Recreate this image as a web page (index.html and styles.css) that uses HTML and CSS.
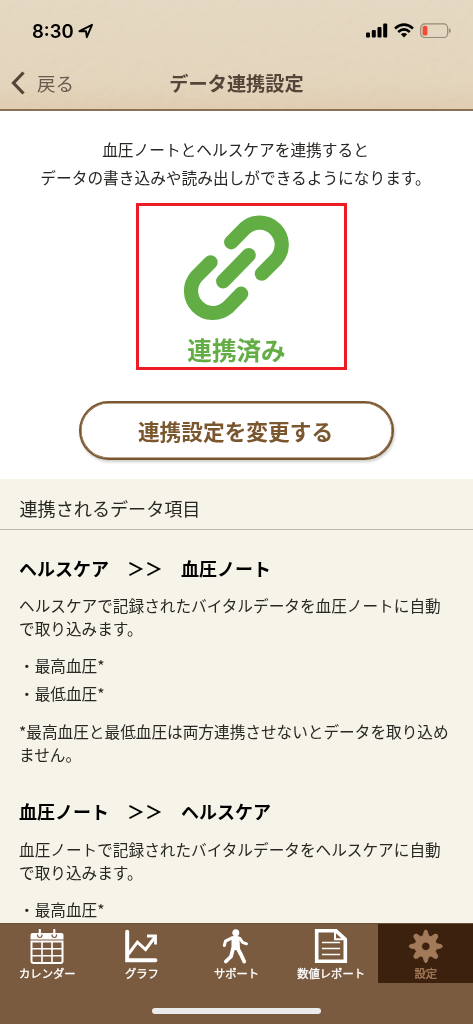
FILE: index.html
```html
<!DOCTYPE html>
<html lang="ja">
<head>
<meta charset="utf-8">
<title>データ連携設定</title>
<link rel="stylesheet" href="styles.css">
</head>
<body>
<div class="screen">
  <header class="top">
    <svg class="leather" width="473" height="109" aria-hidden="true">
      <filter id="grain" x="0" y="0" width="100%" height="100%">
        <feTurbulence type="fractalNoise" baseFrequency="0.09 0.12" numOctaves="3" seed="4" result="n"/>
        <feDiffuseLighting in="n" surfaceScale="2.4" diffuseConstant="0.62" lighting-color="#ffffff"><feDistantLight azimuth="50" elevation="55"/></feDiffuseLighting>
      </filter>
      <rect width="473" height="109" filter="url(#grain)"/>
    </svg>
    <div class="status">
      <div class="clock"><span>8:30</span>
        <svg width="16" height="16" viewBox="0 0 16 16"><path d="M1.5 8.2 14 1.8 8.8 14.2 8 8.2Z" fill="none" stroke="#000" stroke-width="1.9" stroke-linejoin="round"/></svg>
      </div>
      <div class="signals">
        <svg width="22" height="15" viewBox="0 0 22 15"><rect x="0" y="9.5" width="4" height="5" rx="1"/><rect x="5.8" y="7" width="4" height="7.5" rx="1"/><rect x="11.5" y="4" width="4" height="10.5" rx="1"/><rect x="17.2" y="0.6" width="4" height="13.9" rx="1"/></svg>
        <svg width="20" height="15" viewBox="0 0 20 15"><g fill="none" stroke="#000" stroke-width="2.6"><path d="M1 5.4Q10-2 19 5.4"/><path d="M4.2 8.9Q10 4 15.8 8.9"/></g><path d="M6.9 11.3Q10 8.8 13.1 11.3L10 14.4Z"/></svg>
        <svg width="31" height="16" viewBox="0 0 31 16"><rect x=".7" y=".9" width="27" height="13.6" rx="4" fill="none" stroke="#938a7b" stroke-width="1.2"/><rect x="2.6" y="2.8" width="4.8" height="9.8" rx="1.7" fill="#ef4d39"/><path d="M29 5.3q1.8.8 1.8 2.4T29 10.1Z" fill="#938a7b"/></svg>
      </div>
    </div>
    <div class="nav">
      <div class="back"><svg width="14" height="24" viewBox="0 0 14 24"><path d="M12.500 1.500 2.500 12l10 10.500" fill="none" stroke="#554539" stroke-width="3.2"/></svg><span>戻る</span></div>
      <h1>データ連携設定</h1>
    </div>
  </header>

  <section class="link">
    <p class="intro">血圧ノートとヘルスケアを連携すると<br>データの書き込みや読み出しができるようになります。</p>
    <div class="state">
      <svg width="110" height="110" viewBox="0 0 110 110" fill="none" stroke="#62ae45" stroke-width="14.2" stroke-linecap="round">
        <path d="M50.2 31.3 63.9 17.300A22.100 22.100 0 0 1 95.200 48.400L80.800 62.700"/>
        <path d="M42.200 70.300 67.800 44"/>
        <path d="M29.600 51.300 15.200 65.700A22.100 22.100 0 0 0 46.500 96.700L60.200 82.700"/>
      </svg>
      <strong>連携済み</strong>
    </div>
    <button class="change">連携設定を変更する</button>
  </section>

  <main class="items">
    <h2>連携されるデータ項目</h2>
    <section class="flow">
      <h3>ヘルスケア　＞＞　血圧ノート</h3>
      <p>ヘルスケアで記録されたバイタルデータを血圧ノートに自動<br>で取り込みます。</p>
      <ul><li>・最高血圧*</li><li>・最低血圧*</li></ul>
      <p>*最高血圧と最低血圧は両方連携させないとデータを取り込め<br>ません。</p>
    </section>
    <section class="flow">
      <h3>血圧ノート　＞＞　ヘルスケア</h3>
      <p>血圧ノートで記録されたバイタルデータをヘルスケアに自動<br>で取り込みます。</p>
      <ul><li>・最高血圧*</li></ul>
    </section>
  </main>

  <footer class="bar">
    <nav class="tabs">
      <a class="tab"><svg width="36" height="38" viewBox="0 0 36 38"><path d="M3.500 4h29a2 2 0 0 1 2 2v4.600h-33V6a2 2 0 0 1 2-2Z" fill="#fff"/><g fill="none" stroke="#fff" stroke-width="2"><path d="M2.500 12.500h31v19.500a2 2 0 0 1-2 2h-27a2 2 0 0 1-2-2Z"/><path d="M13 12v22M23 12v22M3 19.700h30M3 26.800h30" stroke-width="1.600"/></g><g fill="none" stroke="#7a5b3f" stroke-width="1.200"><path d="M8.500 5.500q0 3 2.300 3t2.300-3M23 5.500q0 3 2.300 3t2.300-3"/></g><path d="M10.800 1v5.500M25.300 1v5.500" stroke="#fff" stroke-width="2.200" stroke-linecap="round"/></svg><span>カレンダー</span></a>
      <a class="tab"><svg width="36" height="38" viewBox="0 0 36 38" fill="none" stroke="#fff"><path d="M3.200 2.800V31.300h28.200" stroke-width="4" stroke-linecap="round"/><path d="M4.500 25 13.400 13.200 21.600 20.500 31 8" stroke-width="3"/><path d="M23 7h8.500v8.500" stroke-width="2.800"/></svg><span>グラフ</span></a>
      <a class="tab"><svg width="36" height="38" viewBox="0 0 36 38"><circle cx="17.800" cy="3.700" r="3.500" fill="#fff"/><path d="M14 9.300Q18 7 22 9.500L24.500 13.300 28.500 14.800" fill="none" stroke="#fff" stroke-width="3" stroke-linecap="round"/><path d="M14 8.800 7.500 12.200 6.300 16.500" fill="none" stroke="#fff" stroke-width="3" stroke-linecap="round" stroke-linejoin="round"/><path d="M13.500 8h8L22 21h-8.500Z" fill="#fff"/><path d="M15 20 13 27.500 7.800 32.500M20 20 23.200 26 26.200 32.500" fill="none" stroke="#fff" stroke-width="3.800" stroke-linecap="round" stroke-linejoin="round"/></svg><span>サポート</span></a>
      <a class="tab"><svg width="36" height="38" viewBox="0 0 36 38" fill="none" stroke="#fff"><path d="M3.700 1.800h19.300l9.300 8.500v22H3.700Z" stroke-width="3.600"/><path d="M22 2.500v7.800h9.500" stroke-width="2"/><path d="M8.900 13.500h18.200M8.900 19.500h18.200M8.900 25.500h18.200" stroke-width="1.700"/></svg><span>数値レポート</span></a>
      <a class="tab active"><svg width="36" height="38" viewBox="0 0 36 38"><path fill="#a27a59" stroke="#a27a59" stroke-width=".9" fill-rule="evenodd" transform="translate(-.2 -.7)" d="M16.700 2.500Q18 .7 19.300 2.500L20.800 7.500 23.200 8.400 27.200 5.800Q30.300 5.500 30 8.600L27.500 12.800 28.500 15.200 33.700 16.500Q35.500 18 33.700 19.500L28.500 20.700 27.500 23.200 30 27.400Q30.300 30.500 27.200 30.200L23.200 27.600 20.800 28.500 19.300 33.500Q18 35.300 16.700 33.500L15.200 28.500 12.800 27.600 8.800 30.200Q5.700 30.500 6 27.400L8.500 23.200 7.500 20.700 2.300 19.500Q.5 18 2.300 16.500L7.500 15.200 8.500 12.800 6 8.600Q5.700 5.500 8.800 5.800L12.800 8.400 15.200 7.500ZM18 13.800a4.200 4.200 0 1 0 .01 0Z"/></svg><span>設定</span></a>
    </nav>
    <div class="home"></div>
  </footer>
</div>
</body>
</html>
```

FILE: styles.css
```css
* { box-sizing: border-box; }
body, h1, h2, h3, p, ul { margin: 0; padding: 0; }
body { font-family: "Noto Sans CJK JP", sans-serif; background: #fff; color: #292724; }
svg { display: block; flex: none; }
.screen { width: 473px; height: 1024px; display: flex; flex-direction: column; overflow: hidden; }

.top { position: relative; flex: none; height: 111px; background: linear-gradient(#e3d6bf, #e1d2b8 75%, #decaad); border-bottom: 2px solid #8c7158; }
.leather { position: absolute; inset: 0; mix-blend-mode: soft-light; opacity: .3; }
.status { position: relative; height: 57px; padding: 4px 22px 0 32px; display: flex; justify-content: space-between; align-items: center; color: #000; }
.clock { display: flex; align-items: center; gap: 4px; font: 600 18.5px/24px Inter, sans-serif; }
.signals { display: flex; align-items: center; gap: 6px; }
.nav { position: relative; height: 51px; display: grid; grid-template-columns: 120px 1fr 120px; align-items: center; color: #554539; }
.back { display: flex; align-items: center; gap: 12px; padding-left: 11px; font-size: 18.5px; line-height: 26px; color: #6a5a4d; }
.nav h1 { font-size: 19.2px; line-height: 28px; font-weight: 700; text-align: center; white-space: nowrap; }

.link { flex: none; height: 368px; padding-top: 25px; display: flex; flex-direction: column; align-items: center; }
.intro { margin-right: 2px; font-size: 15.7px; line-height: 28px; text-align: center; white-space: nowrap; }
.state { width: 211px; height: 167px; margin: 11px 0 0 9px; padding-top: 5px; border: 3px solid #ed1c24; display: flex; flex-direction: column; align-items: center; }
.state svg { margin-right: 10px; }
.state strong { margin: 12px 9px 0 0; font-size: 24.6px; line-height: 32px; font-weight: 700; color: #62ae45; }
.change { width: 315px; height: 59px; margin-top: 31px; padding: 0 2px 0 0; border: 2px solid #7b572f; border-radius: 30px; background: #fff; box-shadow: inset 0 0 0 .6px #7b572f, 1px 2px 3px #0003; font: 700 21.7px/30px "Noto Sans CJK JP", sans-serif; color: #7b572f; }

.items { flex: 1; min-height: 0; overflow: hidden; background: #f6f3e8; }
.items h2 { height: 51px; padding: 14px 19.5px 0; border-bottom: 1px solid #bdbab2; font-size: 18.1px; line-height: 30px; font-weight: 400; }
.flow { padding: 26px 19px 0; font-size: 15.65px; line-height: 23px; white-space: nowrap; }
.flow + .flow { padding-top: 33px; }
.flow h3 { margin-bottom: 14px; color: #000; font-size: 18px; line-height: 24px; font-weight: 700; }
.flow + .flow h3 { margin-bottom: 15px; }
.flow ul { list-style: none; margin: 12px 0 13px; line-height: 27.5px; }

.bar { flex: none; height: 101px; background: #7a5b3f; border-top: 1px solid #6b5039; display: flex; flex-direction: column; align-items: center; }
.tabs { width: 100%; height: 59px; display: grid; grid-template-columns: repeat(5, 1fr); }
.tab { display: flex; flex-direction: column; align-items: center; padding-top: 5px; color: #fff; font-size: 11.3px; line-height: 15px; white-space: nowrap; -webkit-text-stroke: .35px currentColor; }
.tab span { margin-top: -1px; }
.tab.active { background: #3b210e; color: #a27a59; }
.home { width: 169px; height: 6px; margin-top: 25px; border-radius: 3px; background: #ebebeb; }
```
